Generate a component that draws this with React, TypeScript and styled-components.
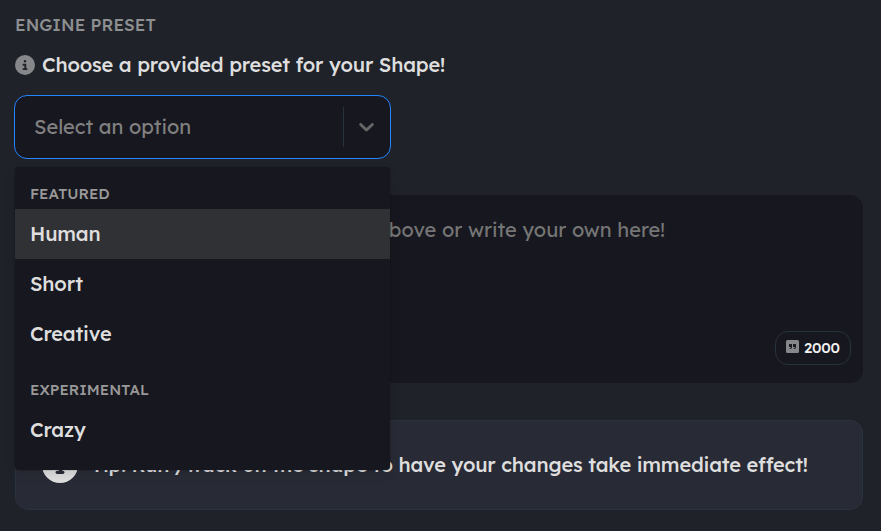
import React from "react";
import styled, { createGlobalStyle } from "styled-components";
import { FaCircleInfo } from "react-icons/fa6";

const GlobalStyle = createGlobalStyle`
  * { box-sizing: border-box; }
  html, body { margin: 0; background: #1f2229; }
  body {
    font-family: Lexend, Inter, sans-serif;
    font-size: 20px;
    font-weight: 500;
    letter-spacing: -0.19px;
    line-height: 24px;
    color: #dedede;
    overflow: hidden;
  }
`;

const Page = styled.main`
  width: 881px;
  height: 531px;
  padding: 13px 18px 0 15px;
  display: flex;
  flex-direction: column;
`;

const Label = styled.h2`
  margin: 0;
  font-size: 17px;
  font-weight: 500;
  line-height: 24px;
  letter-spacing: 0.08px;
  color: #8e8f91;
`;

const Hint = styled.div`
  display: flex;
  align-items: center;
  gap: 7px;
  height: 24px;
  margin-top: 16px;
  white-space: nowrap;
  svg { color: #86878a; }
`;

const SelectWrap = styled.div`
  position: relative;
  width: 377px;
  margin: 18px 0 0 -1px;
`;

const Control = styled.div`
  display: flex;
  align-items: center;
  height: 64px;
  padding-left: 19px;
  border: 1px solid #2684ff;
  border-radius: 13px;
  background: #17171f;
`;

const Placeholder = styled.span`
  flex: 1;
  font-weight: 400;
  letter-spacing: 0;
  color: #808080;
`;

const Separator = styled.span`
  width: 1px;
  height: 40px;
  background: #27323d;
`;

const Indicator = styled.span`
  width: 46px;
  padding: 0 1px 1px 0;
  display: flex;
  justify-content: center;
`;

const Menu = styled.div`
  position: absolute;
  z-index: 1;
  top: 72px;
  left: 1px;
  width: 375px;
  height: 303px;
  padding-top: 14px;
  border-radius: 4px;
  background: #17171f;
  box-shadow: 0 0 0 1px rgba(0, 0, 0, 0.1), 0 4px 11px rgba(0, 0, 0, 0.1);
`;

const Group = styled.section`
  & + & { margin-top: 18px; }
`;

const GroupTitle = styled.h3`
  margin: 0;
  padding: 2px 15px 4px;
  height: 28px;
  font-size: 15px;
  font-weight: 500;
  line-height: 22px;
  letter-spacing: 0;
  color: #999;
`;

const Option = styled.div<{ $active?: boolean }>`
  height: 50px;
  padding: 0 15px;
  line-height: 50px;
  background: ${(p) => (p.$active ? "#303135" : "transparent")};
`;

const Editor = styled.div`
  display: flex;
  flex-direction: column;
  justify-content: space-between;
  height: 188px;
  margin-top: 36px;
  padding: 23px 12px 18px 19px;
  border-radius: 13px;
  background: #17171f;
`;

const EditorHint = styled.div`
  align-self: flex-start;
  width: 631px;
  text-align: right;
  white-space: nowrap;
  font-weight: 400;
  letter-spacing: 0;
  color: #757575;
`;

const Counter = styled.div`
  align-self: flex-end;
  display: flex;
  align-items: center;
  gap: 5px;
  width: 76px;
  height: 34px;
  padding-left: 10px;
  border: 1px solid #27323d;
  border-radius: 13px;
  font-size: 15px;
  font-weight: 500;
  color: #f0f0f0;
  svg { margin-top: -3px; }
`;

const Tip = styled.div`
  display: flex;
  align-items: center;
  gap: 13px;
  height: 90px;
  margin-top: 37px;
  padding: 0 26px;
  border: 1px solid #293340;
  border-radius: 13px;
  background: #282a35;
  white-space: nowrap;
`;

const Chevron = () => (
  <svg width="25" height="25" viewBox="0 0 20 20" fill="#666">
    <path d="M4.516 7.548c0.436-0.446 1.043-0.481 1.576 0l3.908 3.747 3.908-3.747c0.533-0.481 1.141-0.446 1.574 0 0.436 0.445 0.408 1.197 0 1.615-0.406 0.418-4.695 4.502-4.695 4.502-0.217 0.223-0.502 0.335-0.787 0.335s-0.57-0.112-0.789-0.335c0 0-4.287-4.084-4.695-4.502s-0.436-1.17 0-1.615z" />
  </svg>
);

const QuoteSquare = () => (
  <svg width="13" height="13" viewBox="0 0 13 13">
    <rect width="13" height="13" rx="1.5" fill="#86878a" />
    <path
      d="M3.5 4h2q.5 0 .5.5v2.7q0 1.8-1.9 1.8-.5-.1-.4-.6.1-.3.4-.3.9-.1.9-1H3.5q-.5 0-.5-.5V4.5Q3 4 3.5 4zM7.5 4h2q.5 0 .5.5v2.7q0 1.8-1.9 1.8-.5-.1-.4-.6.1-.3.4-.3.9-.1.9-1H7.5q-.5 0-.5-.5V4.5Q7 4 7.5 4z"
      fill="#17171f"
    />
  </svg>
);

const groups = [
  { title: "FEATURED", options: ["Human", "Short", "Creative"] },
  { title: "EXPERIMENTAL", options: ["Crazy"] },
];

export default function App() {
  return (
    <>
      <GlobalStyle />
      <Page>
        <Label>ENGINE PRESET</Label>
        <Hint>
          <FaCircleInfo size={20} />
          <span>Choose a provided preset for your Shape!</span>
        </Hint>
        <SelectWrap>
          <Control>
            <Placeholder>Select an option</Placeholder>
            <Separator />
            <Indicator>
              <Chevron />
            </Indicator>
          </Control>
          <Menu>
            {groups.map((group) => (
              <Group key={group.title}>
                <GroupTitle>{group.title}</GroupTitle>
                {group.options.map((name) => (
                  <Option key={name} $active={name === "Human"}>
                    {name}
                  </Option>
                ))}
              </Group>
            ))}
          </Menu>
        </SelectWrap>
        <Editor>
          <EditorHint>Choose a preset from above or write your own here!</EditorHint>
          <Counter>
            <QuoteSquare />
            2000
          </Counter>
        </Editor>
        <Tip>
          <FaCircleInfo size={36} />
          <span>Tip: Run /wack on the shape to have your changes take immediate effect!</span>
        </Tip>
      </Page>
    </>
  );
}
